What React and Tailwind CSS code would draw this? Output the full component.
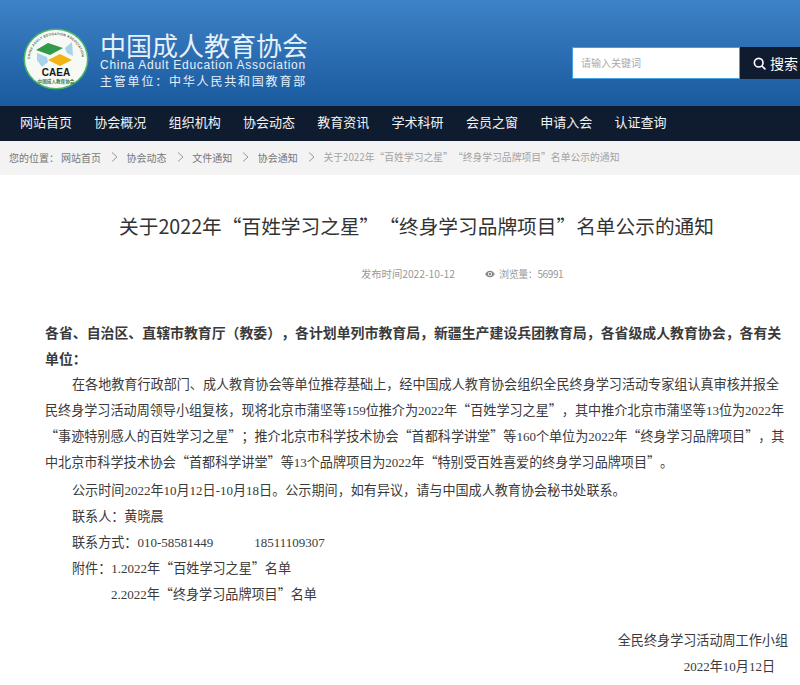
const navItems = ["网站首页", "协会概况", "组织机构", "协会动态", "教育资讯", "学术科研", "会员之窗", "申请入会", "认证查询"];
const crumbs = ["网站首页", "协会动态", "文件通知", "协会通知"];

// digits in the body copy are half-width, the serif face has that width at 13px
function T({ children }) {
  return children.split(/([0-9.\-]+)/).map((part, i) =>
    i % 2 === 1 ? (
      <span key={i} className="font-['Liberation_Serif',serif] text-[13px] leading-[1px]">{part}</span>
    ) : (
      part
    )
  );
}

function Logo() {
  return (
    <svg width="66" height="62" viewBox="0 0 66 62" className="shrink-0">
      <ellipse cx="33" cy="31" rx="32.5" ry="30.5" fill="#45b566" />
      <ellipse cx="33" cy="31" rx="31" ry="29" fill="#f6f9f4" />
      <path id="logoArc" d="M7 31 A26 24 0 0 1 59 31" fill="none" />
      <text fontSize="3.4" fontWeight="700" fontFamily="Liberation Sans" fill="#4b5d55" letterSpacing="0.25">
        <textPath href="#logoArc">CHINA ADULT EDUCATION ASSOCIATION</textPath>
      </text>
      <path d="M13 22 L25 15 L40 20 L27 27 Z" fill="#2f9a48" />
      <path d="M14 25 L24 29 L25 34 L19 39 L14 32 Z" fill="#a9d3ec" />
      <path d="M42 20 L49 14 L50 28 L44 25 Z" fill="#a9d3ec" />
      <path d="M25 32 L37 26 L49 32 L37 38 Z" fill="#f2b415" />
      <text x="33" y="48" textAnchor="middle" fontSize="10" fontWeight="700" fontFamily="Liberation Sans" fill="#161616">CAEA</text>
      <text x="33" y="54.5" textAnchor="middle" fontSize="4.6" fontWeight="700" fontFamily="Noto Sans CJK SC" fill="#3c7a4e">中国成人教育协会</text>
    </svg>
  );
}

export default function App() {
  return (
    <div lang="zh-CN" className="h-[685px] overflow-hidden bg-white [text-spacing-trim:space-all] font-['Noto_Sans_CJK_SC','Liberation_Sans',sans-serif]">
      <header className="h-[106px] flex justify-between bg-gradient-to-b from-[#3d82c6] to-[#1a5a9f]">
        <div className="flex items-start pl-[23px] pt-[28px] gap-[11px]">
          <Logo />
          <div className="text-[#e6f0f8] mt-[8px]">
            <div className="text-[26px] leading-[18px] whitespace-nowrap">中国成人教育协会</div>
            <div className="text-[12px] leading-[14px] mt-[4px] tracking-[0.72px] whitespace-nowrap font-['Liberation_Sans',sans-serif]">China Adult Education Association</div>
            <div className="text-[12px] leading-[18px] tracking-[1.8px] whitespace-nowrap">主管单位：中华人民共和国教育部</div>
          </div>
        </div>
        <div className="flex pt-[47px] h-[79px]">
          <div className="w-[168px] bg-white border border-[#46a0e0] flex items-center pl-[8px] pb-[1px] text-[10px] text-[#aaaaaa]">请输入关键词</div>
          <div className="w-[60px] bg-[#0f1c30] flex items-center pl-[13px] gap-[4px] text-white text-[14px]">
            <svg width="13" height="13" viewBox="0 0 24 24" fill="none" stroke="white" strokeWidth="3" strokeLinecap="round">
              <circle cx="10.5" cy="10.5" r="8" />
              <path d="M17 17 L22 22" />
            </svg>
            <span className="whitespace-nowrap">搜索</span>
          </div>
        </div>
      </header>

      <nav className="h-[35px] bg-[#0f1c30] flex items-center pl-[20px] pb-[4px] gap-[22.3px] text-[13px] text-[#f2f2f2]">
        {navItems.map((item) => (
          <a key={item} className="whitespace-nowrap">{item}</a>
        ))}
      </nav>

      <div className="h-[34px] bg-[#f3f3f3] flex items-center pl-[9px] pb-[2px] text-[10px] text-[#777777] whitespace-nowrap">
        <span className="mr-[2px]">您的位置：</span>
        {crumbs.map((c) => (
          <span key={c} className="flex items-center">
            <span>{c}</span>
            <svg width="7" height="12" viewBox="0 0 7 12" fill="none" stroke="#999999" className="ml-[10px] mr-[8.6px]">
              <path d="M1 1.5 L6 6 L1 10.5" />
            </svg>
          </span>
        ))}
        <span className="text-[#a3a3a3] text-[9.8px]">关于2022年“百姓学习之星”“终身学习品牌项目”名单公示的通知</span>
      </div>

      <main className="pl-[45px] pr-[13px]">
        <h1 className="mt-[37px] pl-[1px] text-[19.7px] leading-[28px] text-[#333333] text-center whitespace-nowrap">
          关于2022年“百姓学习之星”“终身学习品牌项目”名单公示的通知
        </h1>
        <div className="mt-[27px] flex text-[10.3px] leading-[14px] text-[#999999] pl-[316px]">
          <span>发布时间2022-10-12</span>
          <span className="ml-[30px] flex items-center gap-[4px]">
            <svg width="10" height="8" viewBox="0 0 24 18" fill="#888888">
              <path d="M12 1 C6 1 2 6 0.5 9 C2 12 6 17 12 17 C18 17 22 12 23.5 9 C22 6 18 1 12 1 Z M12 14 A5 5 0 1 1 12 4 A5 5 0 0 1 12 14 Z" />
              <circle cx="12" cy="9" r="3" />
            </svg>
            <span className="text-[10px] tracking-[-0.4px]">浏览量：56991</span>
          </span>
        </div>

        <div className="mt-[38px] text-[13.1px] leading-[26px] text-[#3a3a3a]">
          <p className="font-bold text-[13.9px]">各省、自治区、直辖市教育厅（教委），各计划单列市教育局，新疆生产建设兵团教育局，各省级成人教育协会，各有关单位：</p>
          <p className="indent-[27px]"><T>在各地教育行政部门、成人教育协会等单位推荐基础上，经中国成人教育协会组织全民终身学习活动专家组认真审核并报全民终身学习活动周领导小组复核，现将北京市蒲坚等159位推介为2022年“百姓学习之星”，其中推介北京市蒲坚等13位为2022年“事迹特别感人的百姓学习之星”；推介北京市科学技术协会“首都科学讲堂”等160个单位为2022年“终身学习品牌项目”，其中北京市科学技术协会“首都科学讲堂”等13个品牌项目为2022年“特别受百姓喜爱的终身学习品牌项目”。</T></p>
          <p className="indent-[27px] mt-[2px]"><T>公示时间2022年10月12日-10月18日。公示期间，如有异议，请与中国成人教育协会秘书处联系。</T></p>
          <p className="indent-[27px]">联系人：黄晓晨</p>
          <p className="indent-[27px]"><T>联系方式：010-58581449</T><span className="inline-block w-[41px]"></span><T>18511109307</T></p>
          <p className="indent-[27px]"><T>附件：1.2022年“百姓学习之星”名单</T></p>
          <p className="pl-[66px]"><T>2.2022年“终身学习品牌项目”名单</T></p>
          <p className="mt-[20px] text-right -mr-[1px]">全民终身学习活动周工作小组</p>
          <p className="text-right mr-[12px]"><T>2022年10月12日</T></p>
        </div>
      </main>
    </div>
  );
}
